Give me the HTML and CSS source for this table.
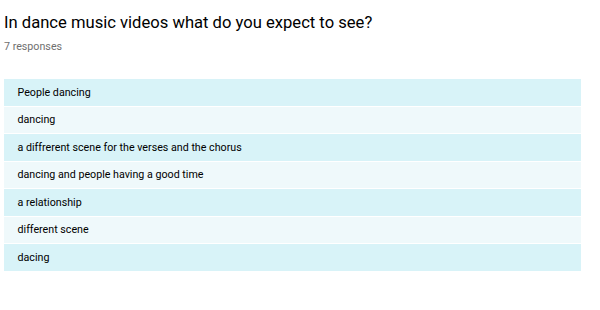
FILE: index.html
```html
<!DOCTYPE html>
<html>
<head>
<meta charset="utf-8">
<link rel="stylesheet" href="styles.css">
</head>
<body>
<div class="card">
  <h1 class="title">In dance music videos what do you expect to see?</h1>
  <div class="count">7 responses</div>
  <div class="list">
    <div class="row">People dancing</div>
    <div class="row">dancing</div>
    <div class="row">a diffrerent scene for the verses and the chorus</div>
    <div class="row">dancing and people having a good time</div>
    <div class="row">a relationship</div>
    <div class="row">different scene</div>
    <div class="row">dacing</div>
  </div>
</div>
</body>
</html>
```
FILE: styles.css
```css
html, body {
  margin: 0;
  padding: 0;
  background: #ffffff;
}
body {
  font-family: Roboto, "Liberation Sans", sans-serif;
  color: #000000;
}
.card {
  padding: 13px 19px 0 4px;
}
.title {
  margin: 0;
  font-size: 16.6px;
  font-weight: 400;
  line-height: 20px;
  color: #000000;
}
.count {
  margin-top: 7px;
  font-size: 10.7px;
  line-height: 14px;
  color: #6f6f6f;
}
.list {
  margin-top: 25px;
  display: flex;
  flex-direction: column;
}
.row {
  height: 26.5px;
  border-bottom: 1px solid #ffffff;
  display: flex;
  align-items: center;
  padding-left: 13.5px;
  font-size: 10.7px;
  color: #000000;
  background: #d8f3f8;
}
.row:nth-child(even) {
  background: #eff9fb;
}
.row:last-child {
  border-bottom: none;
}
```
